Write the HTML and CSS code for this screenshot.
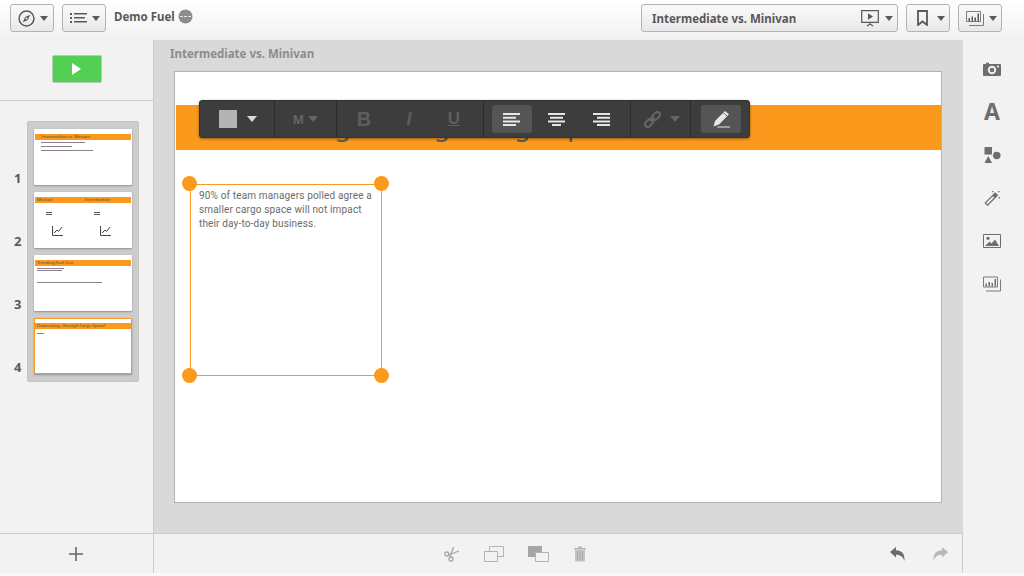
FILE: index.html
```html
<!DOCTYPE html>
<html lang="en">
<head>
    <meta charset="UTF-8">
    <title>Demo Fuel</title>
    <link rel="stylesheet" href="styles.css">
</head>
<body>

    <!-- Top toolbar -->
    <header class="topbar">
        <button class="btn btn-small">
            <svg width="17" height="17" viewBox="0 0 16 16"><circle cx="8" cy="8" r="7" fill="none" stroke="#595959" stroke-width="1.4"/><path d="M11.5 4.500 9.300 9.300 4.500 11.500 6.700 6.700Z" fill="#595959"/><circle cx="8" cy="8" r="1" fill="#f2f2f2"/></svg>
            <span class="caret"></span>
        </button>
        <button class="btn btn-small">
            <svg width="17" height="12" viewBox="0 0 17 12"><path d="M0 1h2v2H0zM0 5h2v2H0zM0 9h2v2H0zM4 1h13v1.600H4zM4 5h11v1.600H4zM4 9h13v1.600H4z" fill="#595959"/></svg>
            <span class="caret"></span>
        </button>
        <span class="app-name">Demo Fuel</span>
        <svg class="app-badge" width="15" height="15" viewBox="0 0 14 14"><circle cx="7" cy="7" r="6.500" fill="#8c8c8c"/><path d="M2 6.500h2.400v1H2zM5.800 6.500h2.400v1H5.800zM9.600 6.500H12v1H9.600z" fill="#f2f2f2"/></svg>
        <div class="spacer"></div>
        <button class="btn btn-sheet">
            <span class="sheet-name">Intermediate vs. Minivan</span>
            <svg width="18" height="18" viewBox="0 0 18 18"><path d="M.7 1.700h16.600v11.600H.7z" fill="none" stroke="#595959" stroke-width="1.200"/><path d="M7 4.200 12 7.500 7 10.800Z" fill="#595959"/><path d="M9 13.300v2M6 17l3-2 3 2" fill="none" stroke="#595959" stroke-width="1.200"/></svg>
            <span class="caret"></span>
        </button>
        <button class="btn btn-small btn-bookmark">
            <svg width="11" height="16" viewBox="0 0 11 16"><path d="M1 1h9v14L5.500 11.500 1 15Z" fill="none" stroke="#595959" stroke-width="1.800"/></svg>
            <span class="caret"></span>
        </button>
        <button class="btn btn-small">
            <svg width="18" height="15" viewBox="0 0 18 15"><path d="M.5.500h14v10H.5z" fill="none" stroke="#7a7a7a"/><path d="M3 14.500h14.500V3" fill="none" stroke="#7a7a7a"/><path d="M2.500 7h1.500v3H2.500zM5.500 5.500H7V10H5.500zM8.500 6.500H10V10H8.500zM11.500 2.500H13V10h-1.500z" fill="#595959"/></svg>
            <span class="caret"></span>
        </button>
    </header>

    <div class="workspace">

        <!-- Sheet list -->
        <aside class="sidebar">
            <div class="play-row">
                <button class="play"><span class="play-arrow"></span></button>
            </div>
            <div class="thumbs">
                <div class="thumb-numbers">
                    <span>1</span>
                    <span>2</span>
                    <span>3</span>
                    <span>4</span>
                </div>
                <div class="tray">
                    <div class="thumb">
                        <div class="thumb-banner thumb-banner-indent">Intermediate vs. Minivan</div>
                        <div class="mini-line line-1a"></div>
                        <div class="mini-line line-1b"></div>
                        <div class="mini-line line-1c"></div>
                    </div>
                    <div class="thumb">
                        <div class="thumb-banner thumb-banner-split"><span>Minivan</span><span>Intermediate</span></div>
                        <div class="mini-columns">
                            <div class="mini-col">
                                <span class="mini-mark"></span>
                                <svg width="11" height="10" viewBox="0 0 11 10"><path d="M.5 0v9.500H11M2 7l3-3 1.500 1.500L10 1" fill="none" stroke="#444" stroke-width="1"/></svg>
                            </div>
                            <div class="mini-col">
                                <span class="mini-mark"></span>
                                <svg width="11" height="10" viewBox="0 0 11 10"><path d="M.5 0v9.500H11M2 7l3-3 1.500 1.500L10 1" fill="none" stroke="#444" stroke-width="1"/></svg>
                            </div>
                        </div>
                    </div>
                    <div class="thumb">
                        <div class="thumb-banner">Trending Fuel Cost</div>
                        <div class="mini-line line-3a"></div>
                        <div class="mini-line line-3b"></div>
                        <div class="mini-line line-3c"></div>
                    </div>
                    <div class="thumb thumb-selected">
                        <div class="thumb-banner">Downsizing...Enough Cargo Space?</div>
                        <div class="mini-line line-4a"></div>
                    </div>
                </div>
            </div>
            <div class="sidebar-foot">
                <svg width="14" height="14" viewBox="0 0 14 14"><path d="M7 0v14M0 7h14" stroke="#666" stroke-width="1.600"/></svg>
            </div>
        </aside>

        <!-- Sheet editor -->
        <main class="editor">
            <div class="stage">
                <div class="stage-title">Intermediate vs. Minivan</div>
                <div class="sheet">
                    <div class="sheet-banner">Downsizing...Enough Cargo Space?</div>

                    <div class="textbox">
                        <span class="handle handle-tl"></span>
                        <span class="handle handle-tr"></span>
                        <span class="handle handle-bl"></span>
                        <span class="handle handle-br"></span>
                        <p>90% of team managers polled agree a smaller cargo space will not impact their day-to-day business.</p>
                    </div>

                    <!-- Text format popup -->
                    <div class="format-bar">
                        <div class="fmt fmt-color">
                            <span class="swatch"></span>
                            <span class="caret caret-light"></span>
                        </div>
                        <div class="fmt fmt-size">
                            <span class="size-m">M</span>
                            <span class="caret caret-dim"></span>
                        </div>
                        <div class="fmt fmt-style">
                            <span class="style-b">B</span>
                            <span class="style-i">I</span>
                            <span class="style-u">U</span>
                        </div>
                        <div class="fmt fmt-align">
                            <span class="tool tool-on">
                                <svg width="17" height="13" viewBox="0 0 17 13"><path d="M0 0h17v2H0zM0 3.700h13v2H0zM0 7.400h17v2H0zM0 11h13v2H0z" fill="#e6e6e6"/></svg>
                            </span>
                            <span class="tool">
                                <svg width="17" height="13" viewBox="0 0 17 13"><path d="M0 0h17v2H0zM2 3.700h13v2H2zM0 7.400h17v2H0zM4 11h9v2H4z" fill="#e6e6e6"/></svg>
                            </span>
                            <span class="tool">
                                <svg width="17" height="13" viewBox="0 0 17 13"><path d="M0 0h17v2H0zM4 3.700h13v2H4zM0 7.400h17v2H0zM4 11h13v2H4z" fill="#e6e6e6"/></svg>
                            </span>
                        </div>
                        <div class="fmt fmt-link">
                            <svg width="17" height="17" viewBox="0 0 17 17"><g fill="none" stroke="#666" stroke-width="2"><rect x="7.500" y="2.300" width="9" height="5.400" rx="2.700" transform="rotate(-45 12 5)"/><rect x=".5" y="9.300" width="9" height="5.400" rx="2.700" transform="rotate(-45 5 12)"/><path d="M6.500 10.500 10.500 6.500"/></g></svg>
                            <span class="caret caret-dim"></span>
                        </div>
                        <div class="fmt fmt-edit">
                            <span class="tool tool-on">
                                <svg width="18" height="18" viewBox="0 0 18 18"><path d="M13 1 17 4.200 7 14.500 1.500 16.500 3 11Z" fill="#e6e6e6"/><path d="M11.300 2.800 15.200 6" stroke="#555" stroke-width=".8"/><path d="M5.500 17h12.500" stroke="#e6e6e6" stroke-width="1"/></svg>
                            </span>
                        </div>
                    </div>
                </div>
            </div>

            <div class="actions">
                <div class="action-group">
                    <svg width="16" height="16" viewBox="0 0 16 16"><g fill="none" stroke="#a6a6a6" stroke-width="1.300"><circle cx="2.800" cy="8" r="2"/><circle cx="7" cy="13" r="2"/><path d="M4.500 9 15 5M6 11 9.500 1"/></g></svg>
                    <svg width="20" height="16" viewBox="0 0 20 16"><g fill="none" stroke="#b3b3b3"><path d="M5.500 5V.5h14v10h-6"/><path d="M.5 5.500h13v10H.5z"/></g></svg>
                    <svg width="21" height="16" viewBox="0 0 21 16"><path d="M0 0h14v10H7v1H0z" fill="#a6a6a6"/><path d="M7.500 6.500h13v9h-13z" fill="#f2f2f2" stroke="#b3b3b3"/></svg>
                    <svg width="14" height="16" viewBox="0 0 14 16"><path d="M1 2h12v1.500H1zM5 .5h4V2H5z" fill="#b3b3b3"/><path d="M2 4h10v11.500H2z" fill="#c4c4c4"/><path d="M4.500 5v9.500M7 5v9.500M9.500 5v9.500" stroke="#ababab"/></svg>
                </div>
                <div class="history">
                    <svg width="15" height="14" viewBox="0 0 15 14"><path d="M0 5 6 0v3.200C11.500 3.200 15 6.500 14.500 14 13 9.800 10.500 7.600 6 7.700V10.500Z" fill="#6b6b6b"/></svg>
                    <svg width="15" height="14" viewBox="0 0 15 14"><path d="M15 5 9 0v3.200C3.500 3.200 0 6.500.5 14 2 9.800 4.500 7.600 9 7.700V10.500Z" fill="#b8b8b8"/></svg>
                </div>
            </div>
        </main>

        <!-- Assets -->
        <aside class="assets">
            <svg width="18" height="14" viewBox="0 0 18 14"><path d="M1 2h2V.8h3V2h11a1 1 0 0 1 1 1v10a1 1 0 0 1-1 1H1a1 1 0 0 1-1-1V3a1 1 0 0 1 1-1Z" fill="#6e6e6e"/><circle cx="9" cy="8" r="4.200" fill="#f2f2f2"/><circle cx="9" cy="8" r="2.300" fill="#6e6e6e"/><circle cx="15" cy="4.500" r="1.100" fill="#f2f2f2"/></svg>
            <span class="asset-a">A</span>
            <svg width="17" height="17" viewBox="0 0 17 17"><path d="M0 0h8v8H0z" fill="#6e6e6e"/><circle cx="13" cy="9" r="4" fill="#6e6e6e"/><path d="M4 9.500 8 17H0Z" fill="#6e6e6e"/></svg>
            <svg width="18" height="18" viewBox="0 0 18 18"><path d="M12.500 3.500 15 6 4 17 1.500 14.500Z" fill="none" stroke="#6e6e6e" stroke-width="1.500"/><path d="M9.500 6.500 12 9 15 6 12.500 3.500Z" fill="#6e6e6e"/><path d="M9 1h1.500v1.500H9zM16 1h1.500v1.500H16zM16.500 8H18v1.500h-1.500z" fill="#6e6e6e"/></svg>
            <svg width="18" height="14" viewBox="0 0 18 14"><path d="M.5.500h17v13H.5z" fill="#f2f2f2" stroke="#6e6e6e"/><circle cx="5" cy="4.300" r="1.600" fill="#6e6e6e"/><path d="M2 12 6.500 7.500 8.500 9.500 12 5.500 16 12Z" fill="#6e6e6e"/></svg>
            <svg width="18" height="15" viewBox="0 0 18 15"><path d="M.5.500h14v10H.5z" fill="none" stroke="#7a7a7a"/><path d="M3 14.500h14.500V3" fill="none" stroke="#7a7a7a"/><path d="M2.500 7h1.500v3H2.500zM5.500 5.500H7V10H5.500zM8.500 6.500H10V10H8.500zM11.500 2.500H13V10h-1.500z" fill="#6e6e6e"/></svg>
        </aside>
    </div>

</body>
</html>
```

FILE: styles.css
```css
/* Base */
* {
    box-sizing: border-box;
}
html, body {
    margin: 0;
    height: 576px;
    overflow: hidden;
}
body {
    font-family: "Noto Sans", sans-serif;
    background-color: #fafafa;
    color: #595959;
}

/* Top toolbar */
.topbar {
    height: 40px;
    display: flex;
    align-items: flex-start;
    padding: 4px 22px 0 10px;
    gap: 8px;
    background: linear-gradient(#ffffff, #f2f2f2);
}
.btn {
    height: 28px;
    padding: 0;
    display: flex;
    align-items: center;
    justify-content: center;
    gap: 5px;
    border: 1px solid #b3b3b3;
    border-radius: 3px;
    background: linear-gradient(#fafafa, #e9e9e9);
    font-family: inherit;
}
.btn-small {
    width: 44px;
    padding-left: 2px;
}
.btn-bookmark {
    padding-left: 6px;
    gap: 9px;
}
.btn-sheet {
    width: 257px;
    padding: 0 4px 0 10px;
    gap: 6px;
}
.sheet-name {
    flex: 1;
    text-align: left;
    font-size: 11.5px;
    font-weight: 700;
    color: #595959;
}
.caret {
    width: 0;
    height: 0;
    border-left: 4px solid transparent;
    border-right: 4px solid transparent;
    border-top: 5px solid #595959;
}
.caret-light {
    border-left-width: 5px;
    border-right-width: 5px;
    border-top: 6px solid #d9d9d9;
}
.caret-dim {
    border-left-width: 5px;
    border-right-width: 5px;
    border-top: 6px solid #666;
}
.app-name {
    padding-top: 5px;
    font-size: 11.5px;
    font-weight: 700;
}
.app-badge {
    margin: 5px 0 0 -5px;
}
.spacer {
    flex: 1;
}

/* Layout */
.workspace {
    height: 533px;
    display: flex;
}
.sidebar {
    width: 154px;
    display: flex;
    flex-direction: column;
    background-color: #f2f2f2;
    border-right: 1px solid #cccccc;
}
.play-row {
    height: 61px;
    display: flex;
    justify-content: center;
    align-items: flex-start;
    padding: 15px 0 0 0;
    border-bottom: 1px solid #cccccc;
}
.play {
    width: 50px;
    height: 28px;
    padding: 0;
    display: flex;
    align-items: center;
    justify-content: center;
    border: 1px solid #b8c9b8;
    border-radius: 2px;
    background-color: #52d053;
}
.play-arrow {
    width: 0;
    height: 0;
    border-top: 6px solid transparent;
    border-bottom: 6px solid transparent;
    border-left: 9px solid #ffffff;
}

/* Sheet thumbnails */
.thumbs {
    flex: 1;
    display: flex;
    align-items: flex-start;
    padding: 20px 0 0 14px;
}
.thumb-numbers {
    width: 13px;
    padding-top: 8px;
    display: flex;
    flex-direction: column;
    gap: 7px;
}
.thumb-numbers span {
    height: 56px;
    display: flex;
    align-items: flex-end;
    font-size: 13px;
    line-height: 14px;
    font-weight: 700;
    color: #595959;
}
.tray {
    width: 112px;
    height: 261px;
    padding: 7px 6px;
    display: flex;
    flex-direction: column;
    gap: 7px;
    background-color: #cccccc;
    border: 1px solid #c4c4c4;
    border-radius: 2px;
}
.thumb {
    height: 56px;
    padding-top: 5px;
    background-color: #ffffff;
    box-shadow: 0 1px 2px rgba(0, 0, 0, 0.3);
    border-radius: 1px;
}
.thumb-selected {
    border: 1px solid #fb991c;
    padding-top: 4px;
}
.thumb-banner {
    height: 6px;
    margin: 0 1px;
    padding-left: 2px;
    background-color: #fb991c;
    font-size: 4.2px;
    line-height: 6px;
    white-space: nowrap;
    overflow: hidden;
    color: #4d4d4d;
}
.thumb-selected .thumb-banner {
    margin: 0;
}
.thumb-banner-indent {
    padding-left: 6px;
}
.thumb-banner-split {
    display: flex;
    gap: 32px;
}
.mini-line {
    height: 1px;
    margin-left: 7px;
    background-color: #8a7f8c;
}
.line-1a { width: 44px; margin-top: 2px; }
.line-1b { width: 31px; margin-top: 3px; }
.line-1c { width: 52px; margin-top: 3px; }
.line-3a { width: 27px; margin: 2px 0 0 3px; }
.line-3b { width: 25px; margin: 1px 0 0 3px; }
.line-3c { width: 65px; margin: 11px 0 0 3px; }
.line-4a { width: 7px; margin: 4px 0 0 2px; }
.mini-columns {
    display: flex;
    padding-left: 12px;
    gap: 31px;
}
.mini-col {
    width: 17px;
    display: flex;
    flex-direction: column;
    align-items: flex-end;
    padding-top: 9px;
    gap: 11px;
}
.mini-mark {
    width: 6px;
    height: 3px;
    margin-right: 11px;
    border-top: 1px solid #555;
    border-bottom: 1px solid #555;
}
.sidebar-foot {
    height: 40px;
    display: flex;
    align-items: center;
    justify-content: center;
    border-top: 1px solid #cccccc;
    padding-right: 1px;
}

/* Editor */
.editor {
    width: 809px;
    display: flex;
    flex-direction: column;
}
.stage {
    flex: 1;
    padding: 6px 20px 0;
    background-color: #d9d9d9;
}
.stage-title {
    height: 25px;
    margin-left: -4px;
    font-size: 11.5px;
    line-height: 16px;
    font-weight: 700;
    color: #8c8c8c;
}
.sheet {
    position: relative;
    width: 768px;
    height: 432px;
    padding: 33px 0 0;
    background-color: #ffffff;
    border: 1px solid #b3b3b3;
}
.sheet-banner {
    height: 45px;
    margin-left: 1px;
    padding-left: 34px;
    background-color: #fb991c;
    font-size: 26px;
    line-height: 42px;
    white-space: nowrap;
    overflow: hidden;
    color: #595959;
}
.textbox {
    position: absolute;
    left: 15px;
    top: 112px;
    width: 192px;
    height: 192px;
    padding: 4px 4px 4px 8px;
    border: 1px solid #fb991c;
}
.textbox p {
    margin: 0;
    font-family: Roboto, sans-serif;
    font-size: 10px;
    line-height: 14px;
    letter-spacing: 0.15px;
    color: #6b6b6b;
}
.handle {
    position: absolute;
    width: 15px;
    height: 15px;
    border-radius: 50%;
    background-color: #fb991c;
}
.handle-tl { left: -9px; top: -9px; }
.handle-tr { right: -8px; top: -9px; }
.handle-bl { left: -9px; bottom: -8px; }
.handle-br { right: -8px; bottom: -8px; }

/* Text format popup */
.format-bar {
    position: absolute;
    left: 24px;
    top: 28px;
    width: 551px;
    height: 38px;
    display: flex;
    background-color: #3d3d3d;
    border: 1px solid #333;
    border-radius: 3px;
    box-shadow: 0 1px 3px rgba(0, 0, 0, 0.4);
}
.fmt {
    display: flex;
    align-items: center;
    justify-content: center;
    border-right: 1px solid #2b2b2b;
}
.fmt:last-child {
    border-right: none;
}
.fmt-color { width: 75px; gap: 10px; padding-left: 1px; }
.fmt-size { width: 62px; gap: 4px; }
.fmt-style { width: 147px; gap: 30px; padding-right: 2px; }
.fmt-align { width: 147px; gap: 5px; }
.fmt-link { width: 60px; gap: 9px; padding-left: 3px; }
.fmt-edit { flex: 1; padding-left: 2px; }
.swatch {
    width: 18px;
    height: 18px;
    background-color: #b3b3b3;
}
.size-m {
    font-size: 12px;
    font-weight: 700;
    color: #666;
}
.style-b, .style-i, .style-u {
    width: 15px;
    text-align: center;
    color: #5e5e5e;
    font-family: "Liberation Sans", sans-serif;
    font-weight: 700;
}
.style-b { font-size: 20px; }
.style-i { font-size: 18px; font-style: italic; }
.style-u { font-size: 17px; text-decoration: underline; }
.tool {
    width: 40px;
    height: 28px;
    display: flex;
    align-items: center;
    justify-content: center;
    border-radius: 3px;
}
.fmt-align .tool svg {
    margin-right: 1px;
}
.tool-on {
    background-color: #555555;
}

/* Bottom actions */
.actions {
    height: 40px;
    display: flex;
    align-items: center;
    justify-content: center;
    position: relative;
    padding-right: 86px;
    background-color: #f2f2f2;
    border-top: 1px solid #cccccc;
    border-right: 1px solid #cccccc;
}
.action-group {
    display: flex;
    align-items: center;
    gap: 24px;
}
.history {
    position: absolute;
    right: 14px;
    top: 13px;
    display: flex;
    gap: 28px;
}

/* Assets */
.assets {
    width: 61px;
    display: flex;
    flex-direction: column;
    align-items: center;
    padding: 21px 3px 0 0;
    background-color: #f2f2f2;
    height: 533px;
}
.assets svg, .asset-a {
    height: 16px;
    margin-bottom: 27px;
}
.asset-a {
    font-size: 23px;
    line-height: 14px;
    font-weight: 700;
    color: #6e6e6e;
}
```
